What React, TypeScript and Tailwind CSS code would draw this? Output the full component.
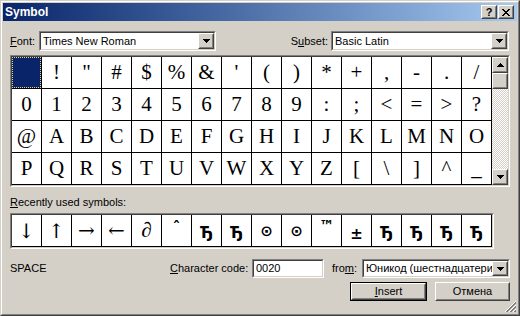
import React from "react";

function Raised({ className = "", children }: { className?: string; children?: React.ReactNode }) {
  return (
    <div className={`border border-t-white border-l-white border-r-[#404040] border-b-[#404040] ${className}`}>
      <div className="w-full h-full border border-t-[#D4D0C8] border-l-[#D4D0C8] border-r-[#808080] border-b-[#808080] bg-[#D4D0C8] flex items-center justify-center">
        {children}
      </div>
    </div>
  );
}

function Sunken({ className = "", innerClass = "", children }: { className?: string; innerClass?: string; children?: React.ReactNode }) {
  return (
    <div className={`border border-t-[#808080] border-l-[#808080] border-r-white border-b-white ${className}`}>
      <div className={`w-full h-full border border-t-[#404040] border-l-[#404040] border-r-[#D4D0C8] border-b-[#D4D0C8] ${innerClass}`}>
        {children}
      </div>
    </div>
  );
}

function DownTri() {
  return (
    <svg width="7" height="4" viewBox="0 0 7 4" shapeRendering="crispEdges">
      <path d="M0 0h7v1H0zM1 1h5v1H1zM2 2h3v1H2zM3 3h1v1H3z" fill="#000" />
    </svg>
  );
}

function UpTri() {
  return (
    <svg width="7" height="4" viewBox="0 0 7 4" shapeRendering="crispEdges">
      <path d="M3 0h1v1H3zM2 1h3v1H2zM1 2h5v1H1zM0 3h7v1H0z" fill="#000" />
    </svg>
  );
}

function Combo({ className = "", text }: { className?: string; text: string }) {
  return (
    <Sunken className={className} innerClass="bg-white flex items-stretch">
      <span className="flex-1 min-w-0 overflow-hidden whitespace-nowrap pl-[2px] flex items-center">{text}</span>
      <Raised className="w-[16px] shrink-0">
        <DownTri />
      </Raised>
    </Sunken>
  );
}

export default function App() {
  const chars = Array.from({ length: 64 }, (_, i) => String.fromCharCode(32 + i));
  const serif = "font-['Liberation_Serif',serif] text-[21px] leading-[31px]";
  const arrow = "font-['DejaVu_Serif','DejaVu_Sans',serif] font-light text-[20px] leading-[31px] [font-variant-emoji:text]";
  const bold = "font-['DejaVu_Sans',sans-serif] font-bold text-[15px] leading-[15px]";
  const dje = "\u0402";
  const recent: { c: string; cls: string }[] = [
    { c: "\u2193\uFE0E", cls: `${arrow} translate-y-[1px]` },
    { c: "\u2191\uFE0E", cls: `${arrow} translate-y-[1px]` },
    { c: "\u2192\uFE0E", cls: arrow },
    { c: "\u2190\uFE0E", cls: arrow },
    { c: "∂", cls: serif },
    { c: "ˆ", cls: `${bold} translate-y-[-2px]` },
    { c: dje, cls: `${bold} translate-y-[3px]` },
    { c: dje, cls: `${bold} translate-y-[3px]` },
    { c: "⊙", cls: `${bold} translate-y-[1px] text-[15px]` },
    { c: "⊙", cls: `${bold} translate-y-[1px] text-[15px]` },
    { c: "™", cls: `${bold} translate-y-[-4px] text-[12px]` },
    { c: "±", cls: `${bold} translate-y-[4px] text-[11px]` },
    { c: dje, cls: `${bold} translate-y-[3px]` },
    { c: dje, cls: `${bold} translate-y-[3px]` },
    { c: dje, cls: `${bold} translate-y-[3px]` },
    { c: dje, cls: `${bold} translate-y-[3px]` },
  ];

  return (
    <div className="w-[520px] h-[316px] relative overflow-hidden bg-[#D4D0C8] border border-t-[#D4D0C8] border-l-[#D4D0C8] border-r-[#404040] border-b-[#404040] font-['Liberation_Sans',Arial,sans-serif] text-[11px] leading-[13px] text-black select-none">
      <div className="h-full border border-t-white border-l-white border-r-[#808080] border-b-[#808080] p-px flex flex-col">
        {/* Title bar */}
        <div className="h-[18px] shrink-0 flex items-center bg-linear-to-r from-[#0A246A] to-[#A6CAF0] pl-[2px] pr-[3px]">
          <span className="text-white font-bold text-[12px] leading-[18px]">Symbol</span>
          <div className="ml-auto flex gap-px">
            <Raised className="w-[16px] h-[14px]">
              <span className="font-bold text-[11px] leading-[10px]">?</span>
            </Raised>
            <Raised className="w-[16px] h-[14px]">
              <svg width="8" height="7" viewBox="0 0 8 7" shapeRendering="crispEdges">
                <path d="M0 0h2v1H0zM6 0h2v1H6zM1 1h2v1H1zM5 1h2v1H5zM2 2h4v1H2zM3 3h2v1H3zM2 4h4v1H2zM1 5h2v1H1zM5 5h2v1H5zM0 6h2v1H0zM6 6h2v1H6z" fill="#000" />
              </svg>
            </Raised>
          </div>
        </div>

        {/* Content */}
        <div className="flex-1 flex flex-col pl-[7px] pr-[7px] pt-[10px]">
          {/* Font / Subset row */}
          <div className="flex items-center h-[20px]">
            <span className="w-[29px]">
              <span className="underline underline-offset-1">F</span>ont:
            </span>
            <Combo className="w-[177px] h-[20px]" text="Times New Roman" />
            <span className="ml-auto pr-[3px]">
              S<span className="underline underline-offset-1">u</span>bset:
            </span>
            <Combo className="w-[178px] h-[20px] mr-px" text="Basic Latin" />
          </div>

          {/* Character grid */}
          <Sunken className="mt-[4px] w-fit" innerClass="flex">
            <div className="grid grid-cols-[repeat(16,30px)] bg-white">
              {chars.map((c, i) => (
                <div key={i} className="w-[30px] h-[32px] border-r border-b border-black flex items-center justify-center">
                  {i === 0 ? (
                    <div className="w-full h-full bg-[#0A246A] border border-dotted border-[#E8D27A]" />
                  ) : (
                    <span className={serif}>{c}</span>
                  )}
                </div>
              ))}
            </div>
            <div className="w-[16px] flex flex-col">
              <Raised className="h-[16px]">
                <UpTri />
              </Raised>
              <Raised className="h-[16px]" />
              <div className="flex-1 [background-image:repeating-conic-gradient(#ffffff_0%_25%,#d4d0c8_0%_50%)] [background-size:2px_2px]" />
              <Raised className="h-[16px]">
                <DownTri />
              </Raised>
            </div>
          </Sunken>

          {/* Recently used */}
          <div className="mt-[9px]">
            <span className="underline underline-offset-1">R</span>ecently used symbols:
          </div>
          <Sunken className="mt-[4px] w-fit" innerClass="flex bg-white">
            {recent.map((r, i) => (
              <div key={i} className="w-[30px] h-[32px] border-r border-b border-black flex items-center justify-center">
                <span className={r.cls}>{r.c}</span>
              </div>
            ))}
          </Sunken>

          {/* Character code row */}
          <div className="mt-[10px] flex items-center h-[19px]">
            <span className="w-[160px]">SPACE</span>
            <span className="w-[82px]">
              <span className="underline underline-offset-1">C</span>haracter code:
            </span>
            <Sunken className="w-[72px] h-[19px]" innerClass="bg-white flex items-center pl-[2px]">
              0020
            </Sunken>
            <span className="w-[38px] pl-[8px]">
              fro<span className="underline underline-offset-1">m</span>:
            </span>
            <Combo className="w-[148px] h-[19px]" text="Юникод (шестнадцатери" />
          </div>

          {/* Buttons */}
          <div className="mt-[4px] flex justify-end gap-[8px]">
            <div className="w-[77px] h-[19px] border border-black">
              <Raised className="w-full h-full">
                <span>
                  <span className="underline underline-offset-1">I</span>nsert
                </span>
              </Raised>
            </div>
            <Raised className="w-[75px] h-[19px]">
              <span>Отмена</span>
            </Raised>
          </div>
        </div>
      </div>

      {/* Size grip */}
      <svg className="absolute right-[2px] bottom-[2px]" width="12" height="12" viewBox="0 0 12 12" shapeRendering="crispEdges">
        <path d="M11 0L0 11M11 4L4 11M11 8L8 11" stroke="#ffffff" strokeWidth="1" />
        <path d="M11 1L1 11M11 2L2 11M11 5L5 11M11 6L6 11M11 9L9 11M11 10L10 11" stroke="#808080" strokeWidth="1" />
      </svg>
    </div>
  );
}
